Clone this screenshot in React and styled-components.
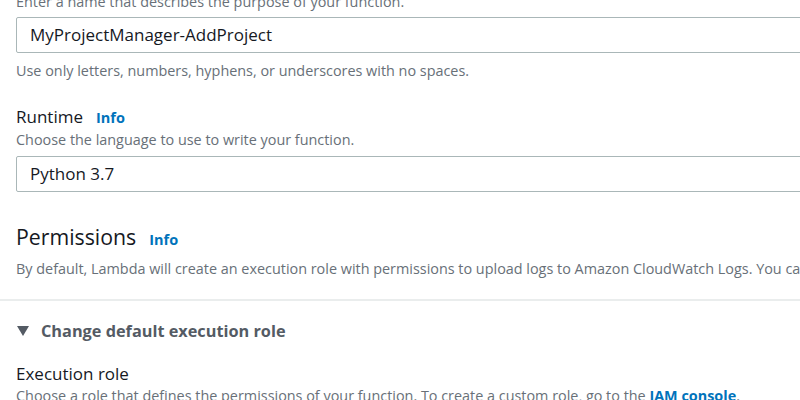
import React from 'react';
import styled, { createGlobalStyle } from 'styled-components';

const COLORS = {
  TEXT: '#16191f',
  HINT: '#687078',
  LINK: '#0073bb',
  BORDER: '#aab7b8',
  DIVIDER: '#eaeded',
  EXPAND: '#545b64',
};

const GlobalStyle = createGlobalStyle`
  html, body {
    margin: 0;
    padding: 0;
    background: #ffffff;
    overflow: hidden;
  }
  body {
    font-family: "Open Sans", "Noto Sans", sans-serif;
    color: ${COLORS.TEXT};
  }
`;

const Page = styled.div`
  width: 1100px;
  margin-top: -8px;
`;

const Section = styled.section`
  display: flex;
  flex-direction: column;
  padding: 0 16px;
`;

const ExpandSection = styled(Section)`
  border-top: 2px solid ${COLORS.DIVIDER};
  margin-top: 20px;
  padding-top: 19px;
`;

const Description = styled.div`
  font-size: 14.4px;
  line-height: 20px;
  color: ${COLORS.HINT};
  white-space: nowrap;
  margin-top: ${(p) => p.$gap || 0}px;
`;

const Label = styled.div`
  font-size: 17px;
  line-height: 22px;
  color: ${COLORS.TEXT};
  margin-top: ${(p) => p.$gap || 0}px;
`;

const Heading = styled.h2`
  margin: 31px 0 0;
  font-size: 21.3px;
  line-height: 28px;
  font-weight: 400;
  color: ${COLORS.TEXT};
`;

const Info = styled.a`
  margin-left: 13px;
  font-size: 14.5px;
  line-height: 1;
  font-weight: 700;
  color: ${COLORS.LINK};
  text-decoration: none;
  cursor: pointer;
`;

const Input = styled.div`
  box-sizing: border-box;
  display: flex;
  align-items: center;
  height: 36px;
  margin-top: ${(p) => p.$gap || 0}px;
  padding: 0 13px;
  border: 1px solid ${COLORS.BORDER};
  border-radius: 2px;
  font-size: 17px;
  line-height: 22px;
  color: ${COLORS.TEXT};
`;

const Toggle = styled.div`
  display: flex;
  align-items: center;
  gap: 12px;
  font-size: 16.3px;
  line-height: 22px;
  font-weight: 700;
  color: ${COLORS.EXPAND};
  cursor: pointer;
`;

const Caret = styled.svg`
  width: 12px;
  height: 10px;
  margin-left: 1px;
  fill: ${COLORS.EXPAND};
`;

const Link = styled.a`
  font-weight: 700;
  color: ${COLORS.LINK};
  text-decoration: none;
`;

const App = () => (
  <>
    <GlobalStyle />
    <Page>
      <Section>
        <Description>Enter a name that describes the purpose of your function.</Description>
        <Input $gap={5}>MyProjectManager-AddProject</Input>
        <Description $gap={8}>
          Use only letters, numbers, hyphens, or underscores with no spaces.
        </Description>

        <Label $gap={25}>
          Runtime<Info>Info</Info>
        </Label>
        <Description $gap={2}>Choose the language to use to write your function.</Description>
        <Input $gap={6}>Python 3.7</Input>

        <Heading>
          Permissions<Info>Info</Info>
        </Heading>
        <Description $gap={8}>
          By default, Lambda will create an execution role with permissions to upload logs to
          Amazon CloudWatch Logs. You can customize this default role later when adding triggers.
        </Description>
      </Section>

      <ExpandSection>
        <Toggle>
          <Caret viewBox="0 0 12 10">
            <path d="M0 0h12L6 10z" />
          </Caret>
          Change default execution role
        </Toggle>
        <Label $gap={21}>Execution role</Label>
        <Description $gap={1}>
          Choose a role that defines the permissions of your function. To create a custom role, go
          to the <Link>IAM console</Link>.
        </Description>
      </ExpandSection>
    </Page>
  </>
);

export default App;
